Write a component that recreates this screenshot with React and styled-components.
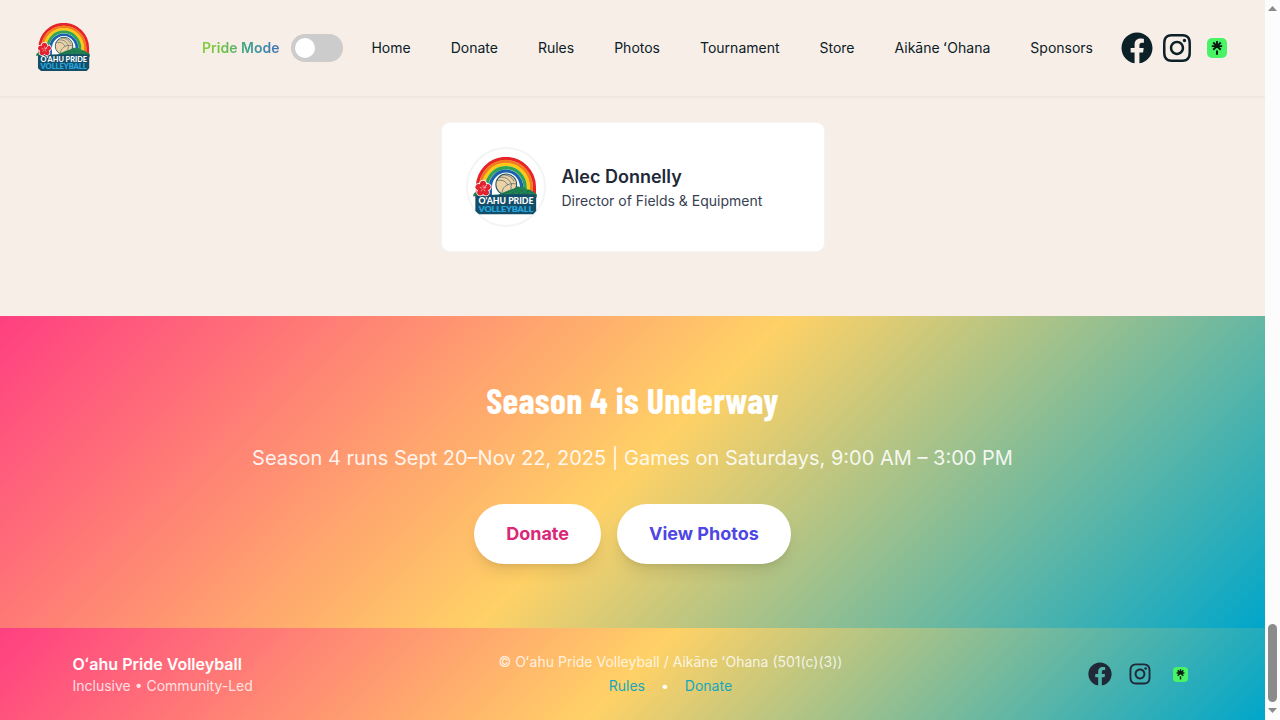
import React from "react";
import styled, { createGlobalStyle, css } from "styled-components";
import { FaFacebook, FaInstagram } from "react-icons/fa";

const GlobalStyle = createGlobalStyle`
  *, *::before, *::after { box-sizing: border-box; }
  body {
    margin: 0;
    overflow: hidden;
    background: #f7eee7;
    font-family: Inter, "Liberation Sans", sans-serif;
    line-height: 1.5;
  }
  a { color: inherit; text-decoration: none; }
  h1, h2, h3, p { margin: 0; }
`;

const sunset = css`
  background: linear-gradient(135deg, #ff3f81 0%, #ffd166 50%, #00a6cb 100%);
`;

const Viewport = styled.div`
  display: flex;
  width: 1280px;
  height: 720px;
  overflow: hidden;
`;

const Page = styled.div`
  width: 1265px;
  display: flex;
  flex-direction: column;
`;

const Header = styled.header`
  height: 98px;
  flex: none;
  padding: 0 32px;
  display: flex;
  align-items: center;
  justify-content: space-between;
  border-bottom: 2px solid #f0e7e1;
`;

const HeaderLogo = styled.a`
  display: flex;
  padding: 0 0 2px 4px;
`;

const HeaderRight = styled.div`
  display: flex;
  align-items: center;
  gap: 28px;
`;

const PrideToggle = styled.div`
  display: flex;
  align-items: center;
  gap: 12px;
`;

const PrideLabel = styled.span`
  font-size: 14px;
  line-height: 20px;
  font-weight: 600;
  color: transparent;
  background: linear-gradient(90deg, #86cf38 0%, #6cc04a 30%, #3fa08c 60%, #3d8aae 82%, #4472b8 100%);
  background-clip: text;
  -webkit-background-clip: text;
`;

const Switch = styled.button`
  width: 52px;
  height: 28px;
  padding: 4px;
  border: 0;
  border-radius: 14px;
  background: #ccc;
  display: flex;
  align-items: center;
`;

const Knob = styled.span`
  width: 20px;
  height: 20px;
  border-radius: 50%;
  background: #fff;
`;

const Nav = styled.nav`
  display: flex;
  gap: 40px;
`;

const NavLink = styled.a`
  font-size: 14px;
  line-height: 20px;
  color: #0b2027;
  white-space: nowrap;
`;

const SocialRow = styled.div`
  display: flex;
  align-items: center;
  gap: ${(p) => p.$gap}px;
  color: ${(p) => p.$color};
`;

const SocialLink = styled.a`
  width: ${(p) => p.$size}px;
  height: ${(p) => p.$size}px;
  padding-left: ${(p) => p.$nudge || 0}px;
  display: flex;
  align-items: center;
  justify-content: center;
`;

const Team = styled.section`
  height: 218px;
  flex: none;
  padding-top: 25px;
  display: flex;
  justify-content: center;
  align-items: flex-start;
`;

const MemberCard = styled.article`
  width: 382px;
  height: 128px;
  padding: 24px;
  display: flex;
  align-items: center;
  gap: 16px;
  background: #fff;
  border-radius: 8px;
  box-shadow: 0 0 0 1px #f3f4f6;
`;

const Avatar = styled.div`
  width: 80px;
  height: 80px;
  border-radius: 50%;
  border: 2px solid #f3f4f6;
  display: flex;
  align-items: center;
  justify-content: center;
  padding: 0 1px 2px 0;
`;

const MemberName = styled.h3`
  font-size: 18px;
  line-height: 28px;
  font-weight: 600;
  color: #1f2937;
`;

const MemberRole = styled.p`
  font-size: 14px;
  line-height: 20px;
  color: #374151;
`;

const Cta = styled.section`
  ${sunset}
  height: 312px;
  flex: none;
  padding: 64px 0;
  display: flex;
  flex-direction: column;
  align-items: center;
  color: #fff;
`;

const CtaTitle = styled.h2`
  font-family: "Barlow Condensed", Roboto, "Open Sans", sans-serif;
  font-size: 36px;
  line-height: 40px;
  font-weight: 700;
  letter-spacing: 0.01em;
  white-space: nowrap;
`;

const CtaText = styled.p`
  margin-top: 24px;
  font-size: 20px;
  line-height: 28px;
  color: rgba(255, 255, 255, 0.9);
  white-space: nowrap;
`;

const CtaButtons = styled.div`
  margin-top: 32px;
  display: flex;
  gap: 16px;
`;

const PillButton = styled.a`
  padding: 16px 32px;
  border-radius: 30px;
  background: #fff;
  color: ${(p) => p.$color};
  font-size: 18px;
  line-height: 28px;
  font-weight: 700;
  box-shadow: 0 10px 15px -3px rgba(0, 0, 0, 0.1), 0 4px 6px -4px rgba(0, 0, 0, 0.1);
`;

const Footer = styled.footer`
  ${sunset}
  height: 92px;
  flex: none;
  padding: 24px 73px 24px 72.5px;
  display: flex;
  justify-content: space-between;
  color: #fff;
`;

const FooterBrand = styled.div`
  font-size: 16px;
  line-height: 24px;
  font-weight: 600;
`;

const FooterText = styled.div`
  font-size: 14px;
  line-height: 20px;
  color: rgba(255, 255, 255, 0.8);
  white-space: nowrap;
`;

const FooterCenter = styled.div`
  display: flex;
  flex-direction: column;
  align-items: center;
  gap: 4px;
`;

const FooterLinks = styled.div`
  display: flex;
  gap: 16px;
  font-size: 14px;
  line-height: 20px;
`;

const FooterLink = styled.a`
  color: #16a7bd;
`;

const FooterSocial = styled.div`
  display: flex;
  align-items: center;
`;

const ScrollTrack = styled.div`
  width: 15px;
  background: #fcfcfc;
  display: flex;
  flex-direction: column;
  align-items: center;
  padding: 6px 0 7px;
`;

const ScrollThumb = styled.div`
  width: 9px;
  height: 78px;
  margin-top: auto;
  margin-bottom: 6px;
  border-radius: 4.5px;
  background: #8b8b8b;
`;

const petals = [0, 72, 144, 216, 288];

function ClubLogo({ width, height }) {
  const bands = [
    ["#e52329", 84.5],
    ["#f47b20", 75.5],
    ["#fcc917", 66.5],
    ["#2fa455", 57],
    ["#1c62ac", 46.5],
  ];
  return (
    <svg width={width} height={height} viewBox="130 141 189 173" preserveAspectRatio="none" role="img">
      <path d="M150 252V230a78 78 0 0 1 156 0v22Z" fill="#fff" />
      {bands.map(([color, r]) => (
        <path
          key={color}
          d={`M${228 - r} 254V230a${r} ${r} 0 0 1 ${2 * r} 0v24`}
          fill="none"
          stroke={color}
          strokeWidth="10"
        />
      ))}
      <circle cx="229" cy="224" r="37" fill="#fff" />
      <circle cx="229" cy="223" r="31" fill="#edd2a7" stroke="#24505f" strokeWidth="3" />
      <g fill="none" stroke="#24505f" strokeWidth="1.8">
        <path d="M201 211c16-3 26 2 32 13M207 202c17-3 29 3 36 17M218 194c16 0 28 7 34 20" />
        <path d="M233 224c-12 6-17 15-17 28M233 224c9-4 18-5 27-2M245 220c-3 12-2 22 0 32" />
      </g>
      <path d="M200 256l18-8 18-8 14-4 14-8 8 4 8-2 12 8 8 1 20 13v10Z" fill="#238451" />
      <path d="M218 252l22-9 24-11M240 253l28-16M262 253l12-14 10 12M290 252l4-12 16 11" fill="none" stroke="#105d50" strokeWidth="2.5" strokeDasharray="4 2" />
      <path d="M130 258c1-9 7-14 16-12l38 6-16 7Z" fill="#238451" />
      <path d="M137 256q45-1 80-4l-22 2q60-4 123-1v49l-9 10H148l-11-10Z" fill="#134d68" />
      <g>
        {petals.map((a) => (
          <ellipse key={`o${a}`} cx="160" cy="222" rx="12" ry="13" fill="#fff" transform={`rotate(${a} 160 235)`} />
        ))}
        {petals.map((a) => (
          <ellipse key={`p${a}`} cx="160" cy="223" rx="9.5" ry="11.5" fill="#e3222f" transform={`rotate(${a} 160 235)`} />
        ))}
        {petals.map((a) => (
          <path key={`s${a}`} d="M160 235v-10" stroke="#fff" strokeWidth="1.5" transform={`rotate(${a} 160 235)`} />
        ))}
        <circle cx="160" cy="235" r="3.5" fill="#e3222f" />
        <path d="M161 234l11-11" stroke="#fff" strokeWidth="2.5" />
      </g>
      <g fontFamily='Lato, "Open Sans", sans-serif' fontWeight="900">
        <text x="146" y="280" fontSize="25" fill="#fff" textLength="164" lengthAdjust="spacingAndGlyphs">O'AHU PRIDE</text>
        <text x="146" y="304" fontSize="23" fill="#29a5dc" stroke="#29a5dc" strokeWidth="0.6" textLength="163" lengthAdjust="spacingAndGlyphs">VOLLEYBALL</text>
      </g>
    </svg>
  );
}

function LinktreeIcon({ size }) {
  return (
    <svg width={size} height={size} viewBox="0 0 20 20">
      <rect width="20" height="20" rx="5" fill="#48f465" />
      <path
        d="M10 3v7M4.8 8.1h10.4M6.2 4.5l7.6 7.3M13.8 4.5l-7.6 7.3M10 12.4v4.4"
        fill="none"
        stroke="#0b1b12"
        strokeWidth="1.9"
      />
    </svg>
  );
}

function Socials({ size, gap, color }) {
  return (
    <SocialRow $gap={gap} $color={color}>
      <SocialLink $size={size}><FaFacebook size={size} /></SocialLink>
      <SocialLink $size={size}><FaInstagram size={size} /></SocialLink>
      <SocialLink $size={size} $nudge={0.6}><LinktreeIcon size={size * 0.625} /></SocialLink>
    </SocialRow>
  );
}

const navItems = ["Home", "Donate", "Rules", "Photos", "Tournament", "Store", "Aikāne ʻOhana", "Sponsors"];

export default function App() {
  return (
    <Viewport>
      <GlobalStyle />
      <Page>
        <Header>
          <HeaderLogo><ClubLogo width={53.5} height={48.5} /></HeaderLogo>
          <HeaderRight>
            <PrideToggle>
              <PrideLabel>Pride Mode</PrideLabel>
              <Switch><Knob /></Switch>
            </PrideToggle>
            <Nav>
              {navItems.map((item) => <NavLink key={item}>{item}</NavLink>)}
            </Nav>
            <Socials size={32} gap={8} color="#0b2027" />
          </HeaderRight>
        </Header>
        <Team>
          <MemberCard>
            <Avatar><ClubLogo width={63.5} height={58} /></Avatar>
            <div>
              <MemberName>Alec Donnelly</MemberName>
              <MemberRole>Director of Fields &amp; Equipment</MemberRole>
            </div>
          </MemberCard>
        </Team>
        <Cta>
          <CtaTitle>Season 4 is Underway</CtaTitle>
          <CtaText>Season 4 runs Sept 20–Nov 22, 2025 | Games on Saturdays, 9:00 AM – 3:00 PM</CtaText>
          <CtaButtons>
            <PillButton $color="#db2777">Donate</PillButton>
            <PillButton $color="#4f46e5">View Photos</PillButton>
          </CtaButtons>
        </Cta>
        <Footer>
          <div>
            <FooterBrand>Oʻahu Pride Volleyball</FooterBrand>
            <FooterText>Inclusive • Community-Led</FooterText>
          </div>
          <FooterCenter>
            <FooterText>© Oʻahu Pride Volleyball / Aikāne ʻOhana (501(c)(3))</FooterText>
            <FooterLinks>
              <FooterLink>Rules</FooterLink>
              <span>•</span>
              <FooterLink>Donate</FooterLink>
            </FooterLinks>
          </FooterCenter>
          <FooterSocial>
            <Socials size={24} gap={16} color="#1f2937" />
          </FooterSocial>
        </Footer>
      </Page>
      <ScrollTrack>
        <svg width="9" height="5" viewBox="0 0 9 5"><path d="M4.5 0L9 5H0Z" fill="#8b8b8b" /></svg>
        <ScrollThumb />
        <svg width="9" height="5" viewBox="0 0 9 5"><path d="M0 0h9L4.5 5Z" fill="#8b8b8b" /></svg>
      </ScrollTrack>
    </Viewport>
  );
}
